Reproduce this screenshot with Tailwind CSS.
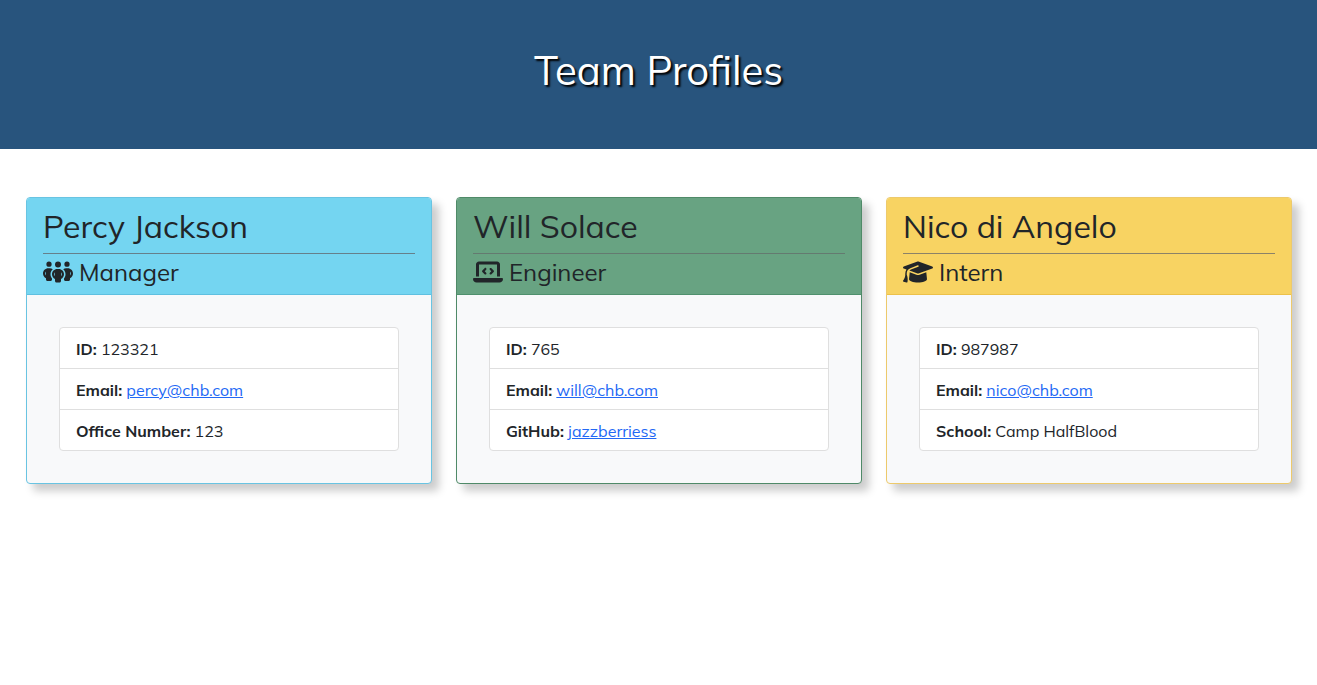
<!DOCTYPE html>
<html lang="en">
<head>
<meta charset="utf-8">
<meta name="viewport" content="width=device-width, initial-scale=1">
<title>Team Profiles</title>
<script src="https://cdn.jsdelivr.net/npm/@tailwindcss/browser@4"></script>
</head>
<body class="bg-white font-['Mulish','Muli','Nunito','Lato',sans-serif] text-base leading-6 text-[#212529]">
<header class="bg-[#28547d] px-4 pt-[46px] pb-[55px] text-center">
  <h1 class="text-[40px] leading-[48px] text-white [text-shadow:2px_2px_2px_#000]">Team Profiles</h1>
</header>
<main class="grid grid-cols-1 gap-6 py-12 pr-[25px] pl-[26px] md:grid-cols-3">
  <section class="rounded border border-[#69c4e2] bg-[#f8f9fa] shadow-[7px_7px_8px_#ccc]">
    <div class="rounded-t-[3px] border-b border-[#5fc0e0] bg-[#74d5f1] px-4 py-2">
      <h2 class="border-b border-[#66808b] pb-[7px] text-[32px] leading-10">Percy Jackson</h2>
      <h3 class="flex items-center gap-[6px] pt-1 text-2xl leading-7">
        <svg class="h-6 w-[30px]" viewBox="0 0 640 512" fill="currentColor" aria-hidden="true"><path d="M72 88a56 56 0 1 1 112 0A56 56 0 1 1 72 88zM64 245.7C54 256.9 48 271.8 48 288s6 31.1 16 42.3V245.7zm144.4-49.3C178.7 222.7 160 261.2 160 304c0 34.3 12 65.8 32 90.5V416c0 17.7-14.3 32-32 32H96c-17.7 0-32-14.3-32-32V389.2C26.2 371.2 0 332.7 0 288c0-61.9 50.1-112 112-112h32c24 0 46.2 7.5 64.4 20.3zM448 416V394.5c20-24.7 32-56.2 32-90.5c0-42.8-18.7-81.3-48.4-107.7C449.8 183.5 472 176 496 176h32c61.9 0 112 50.1 112 112c0 44.7-26.2 83.2-64 101.2V416c0 17.7-14.3 32-32 32H480c-17.7 0-32-14.3-32-32zm8-328a56 56 0 1 1 112 0A56 56 0 1 1 456 88zM576 245.7v84.7c10-11.3 16-26.1 16-42.3s-6-31.1-16-42.3zM320 32a64 64 0 1 1 0 128 64 64 0 1 1 0-128zM240 304c0 16.2 6 31 16 42.3V261.7c-10 11.3-16 26.1-16 42.3zm144-42.3v84.7c10-11.3 16-26.1 16-42.3s-6-31.1-16-42.3zM448 304c0 44.7-26.2 83.2-64 101.2V448c0 17.7-14.3 32-32 32H288c-17.7 0-32-14.3-32-32V405.2c-37.8-18-64-56.5-64-101.2c0-61.9 50.1-112 112-112h32c61.9 0 112 50.1 112 112z"/></svg>
        Manager
      </h3>
    </div>
    <div class="p-8">
      <ul class="divide-y divide-[#dfdfdf] rounded border border-[#dfdfdf] bg-white">
        <li class="px-4 pt-[9px] pb-[7px]"><b class="font-bold">ID:</b> 123321</li>
        <li class="px-4 pt-[9px] pb-[7px]"><b class="font-bold">Email:</b> <a class="text-[#2268f5] underline" href="mailto:percy@chb.com">percy@chb.com</a></li>
        <li class="px-4 pt-[9px] pb-[7px]"><b class="font-bold">Office Number:</b> 123</li>
      </ul>
    </div>
  </section>
  <section class="rounded border border-[#4f8a68] bg-[#f8f9fa] shadow-[7px_7px_8px_#ccc]">
    <div class="rounded-t-[3px] border-b border-[#4f906d] bg-[#68a382] px-4 py-2">
      <h2 class="border-b border-[#647a70] pb-[7px] text-[32px] leading-10">Will Solace</h2>
      <h3 class="flex items-center gap-[6px] pt-1 text-2xl leading-7">
        <svg class="h-6 w-[30px]" viewBox="0 0 640 512" fill="currentColor" aria-hidden="true"><path d="M64 96c0-35.3 28.7-64 64-64H512c35.3 0 64 28.7 64 64V352H512V96H128V352H64V96zM0 403.2C0 392.6 8.6 384 19.2 384H620.8c10.6 0 19.2 8.6 19.2 19.2c0 42.4-34.4 76.8-76.8 76.8H76.8C34.4 480 0 445.6 0 403.2zM281 209l-31 31 31 31c9.4 9.4 9.4 24.6 0 33.9s-24.6 9.4-33.9 0l-48-48c-9.4-9.4-9.4-24.6 0-33.9l48-48c9.4-9.4 24.6-9.4 33.9 0s9.4 24.6 0 33.9zM393 175l48 48c9.4 9.4 9.4 24.6 0 33.9l-48 48c-9.4 9.4-24.6 9.4-33.9 0s-9.4-24.6 0-33.9l31-31-31-31c-9.4-9.4-9.4-24.6 0-33.9s24.6-9.4 33.9 0z"/></svg>
        Engineer
      </h3>
    </div>
    <div class="p-8">
      <ul class="divide-y divide-[#dfdfdf] rounded border border-[#dfdfdf] bg-white">
        <li class="px-4 pt-[9px] pb-[7px]"><b class="font-bold">ID:</b> 765</li>
        <li class="px-4 pt-[9px] pb-[7px]"><b class="font-bold">Email:</b> <a class="text-[#2268f5] underline" href="mailto:will@chb.com">will@chb.com</a></li>
        <li class="px-4 pt-[9px] pb-[7px]"><b class="font-bold">GitHub:</b> <a class="text-[#2268f5] underline" href="https://github.com/jazzberriess">jazzberriess</a></li>
      </ul>
    </div>
  </section>
  <section class="rounded border border-[#edca6c] bg-[#f8f9fa] shadow-[7px_7px_8px_#ccc]">
    <div class="rounded-t-[3px] border-b border-[#ecc14a] bg-[#f8d362] px-4 py-2">
      <h2 class="border-b border-[#8b8268] pb-[7px] text-[32px] leading-10">Nico di Angelo</h2>
      <h3 class="flex items-center gap-[6px] pt-1 text-2xl leading-7">
        <svg class="h-6 w-[30px]" viewBox="0 0 640 512" fill="currentColor" aria-hidden="true"><path d="M320 32c-8.1 0-16.1 1.4-23.7 4.1L15.8 137.4C6.3 140.9 0 149.9 0 160s6.3 19.1 15.8 22.6l57.9 20.9C57.3 229.3 48 259.8 48 291.9v28.1c0 28.4-10.8 57.7-22.3 80.8c-6.5 13-13.9 25.8-22.5 37.6C0 442.7-.9 448.3 .9 453.4s6 8.9 11.2 10.2l64 16c4.2 1.1 8.7 .3 12.4-2s6.3-6.1 7.1-10.4c8.6-42.8 4.3-81.2-2.1-108.7C90.3 344.3 86 329.8 80 316.5V291.9c0-30.2 10.2-58.7 27.9-81.5c12.9-15.5 29.6-28 49.2-35.7l157-61.7c8.2-3.2 17.5 .8 20.7 9s-.8 17.5-9 20.7l-157 61.7c-12.4 4.9-23.3 12.4-32.2 21.6l159.6 57.6c7.6 2.7 15.6 4.1 23.7 4.1s16.1-1.4 23.7-4.1L624.2 182.6c9.5-3.4 15.8-12.5 15.8-22.6s-6.3-19.1-15.8-22.6L343.7 36.1C336.1 33.4 328.1 32 320 32zM128 408c0 35.3 86 72 192 72s192-36.7 192-72L496.7 262.6 354.5 314c-11.1 4-22.8 6-34.5 6s-23.5-2-34.5-6L143.3 262.6 128 408z"/></svg>
        Intern
      </h3>
    </div>
    <div class="p-8">
      <ul class="divide-y divide-[#dfdfdf] rounded border border-[#dfdfdf] bg-white">
        <li class="px-4 pt-[9px] pb-[7px]"><b class="font-bold">ID:</b> 987987</li>
        <li class="px-4 pt-[9px] pb-[7px]"><b class="font-bold">Email:</b> <a class="text-[#2268f5] underline" href="mailto:nico@chb.com">nico@chb.com</a></li>
        <li class="px-4 pt-[9px] pb-[7px]"><b class="font-bold">School:</b> Camp HalfBlood</li>
      </ul>
    </div>
  </section>
</main>
</body>
</html>
